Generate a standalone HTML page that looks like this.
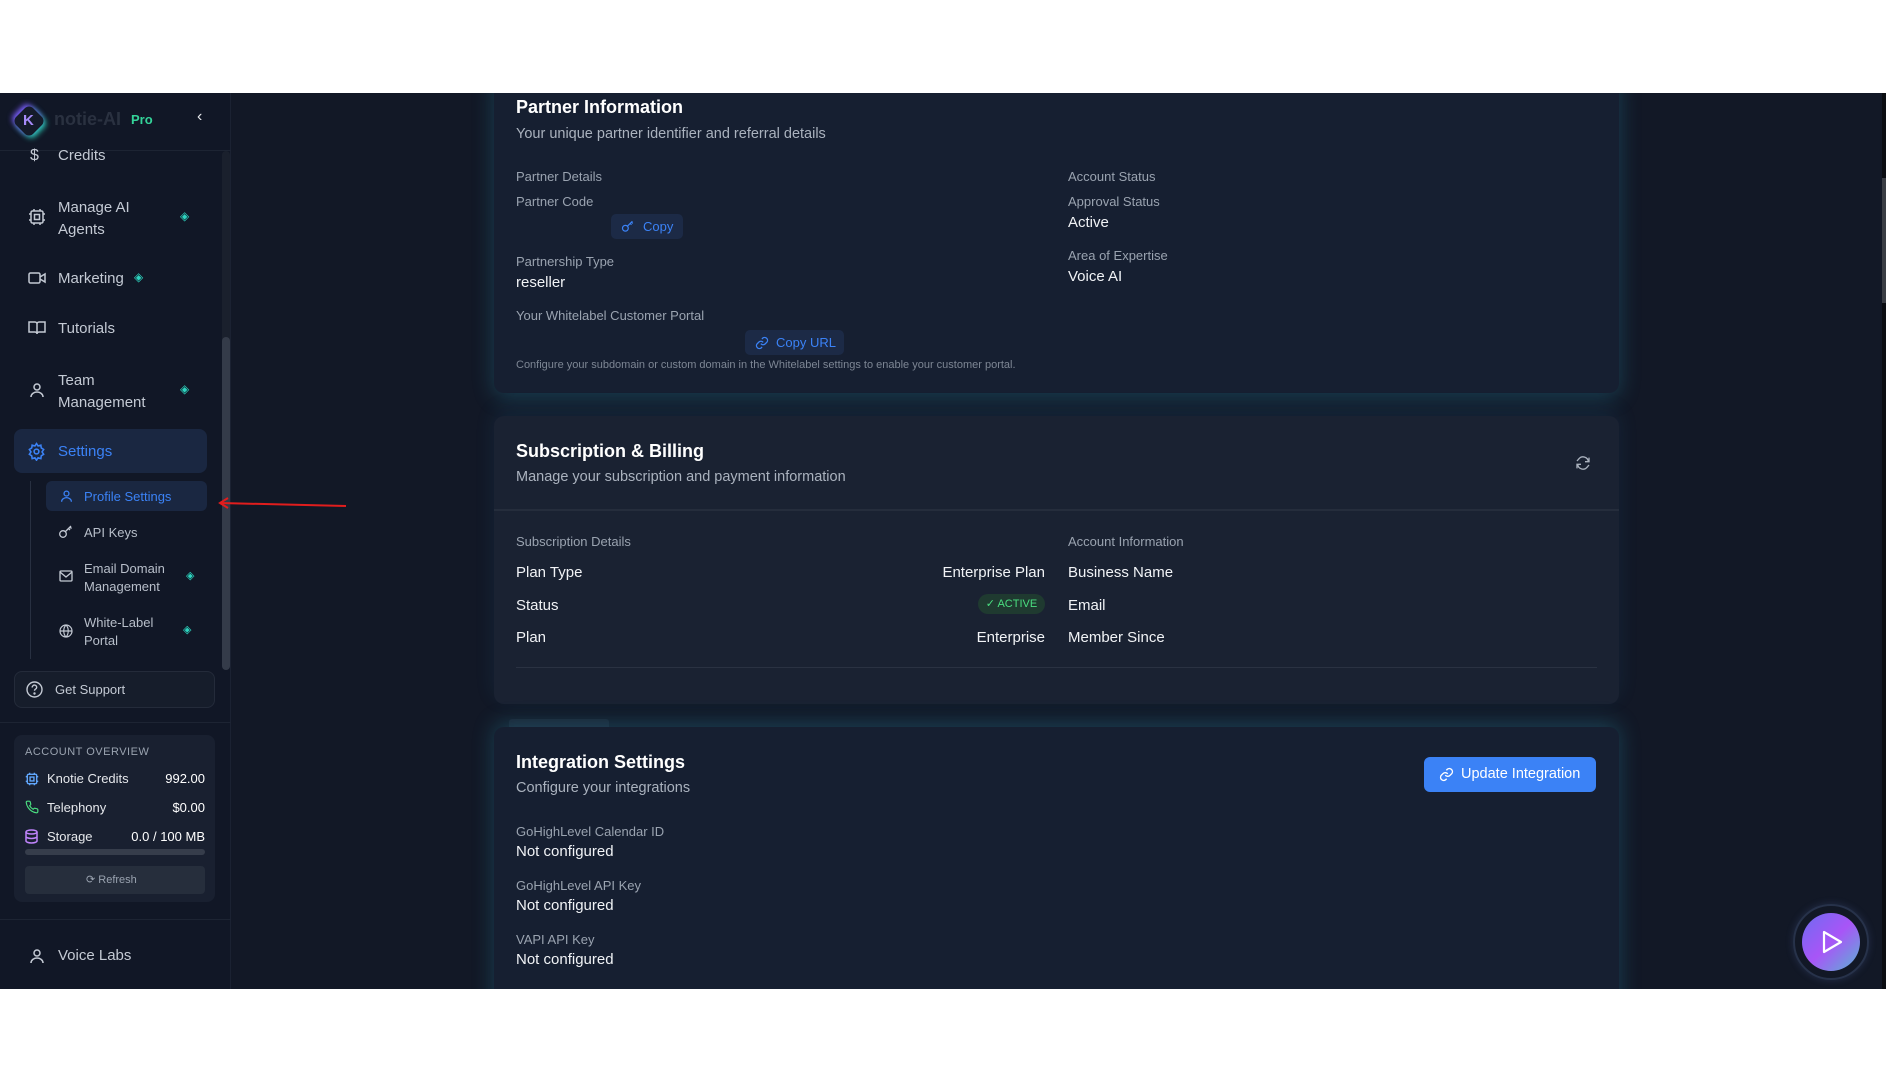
<!DOCTYPE html>
<html><head><meta charset="utf-8"><style>
*{margin:0;padding:0;box-sizing:border-box}
body{width:1886px;height:1080px;background:#fff;font-family:"Liberation Sans",sans-serif;position:relative;overflow:hidden}
.a{position:absolute;white-space:nowrap}
#app{position:absolute;left:0;top:93px;width:1886px;height:896px;background:#121826;overflow:hidden}
#side{position:absolute;left:0;top:0;width:231px;height:896px;background:#111726;border-right:1px solid #1b2232}
.nav{color:#c4cad4;font-size:15px;line-height:22px}
.sub{color:#b8bfca;font-size:13px;line-height:18px}
.lbl{color:#9aa3b0;font-size:13px}
.val{color:#f1f3f6;font-size:15px}
.card{position:absolute;left:494px;width:1125px;border-radius:10px}
svg{position:absolute}
</style></head><body>
<div id="app">
 <div id="side">
  <div class="a" style="left:0;top:57px;width:231px;height:1px;background:#1d2433"></div>
  <div class="a" style="left:17px;top:16px;width:24px;height:24px;background:#151b2a;border-radius:6px;transform:rotate(45deg);box-shadow:-3px 0 6px #7c5cff,3px 0 6px #2dd4bf"></div>
  <div class="a" style="left:23px;top:19px;color:#a78bfa;font-weight:bold;font-size:15px">K</div>
  <div class="a" style="left:54px;top:16px;color:#2a3140;font-weight:bold;font-size:18px">notie-AI</div>
  <div class="a" style="left:131px;top:19px;color:#34d399;font-weight:bold;font-size:13px">Pro</div>
  <div class="a" style="left:197px;top:15px;color:#e5e7eb;font-size:16px">‹</div>
  <div class="a nav" style="left:30px;top:52px;font-size:16px">$</div>
  <div class="a nav" style="left:58px;top:52px">Credits</div>
  <svg style="left:28px;top:115px" width="18" height="18" viewBox="0 0 18 18" fill="none" stroke="#c4cad4" stroke-width="1.5"><rect x="3" y="3" width="12" height="12" rx="1.5"/><rect x="6.5" y="6.5" width="5" height="5"/><path d="M6 1v2M12 1v2M6 15v2M12 15v2M1 6h2M1 12h2M15 6h2M15 12h2"/></svg>
  <div class="a nav" style="left:58px;top:104px">Manage AI</div>
  <div class="a nav" style="left:58px;top:126px">Agents</div>
  <div class="a" style="left:180px;top:116px;color:#2dd4bf;font-size:12px">◈</div>
  <svg style="left:28px;top:177px" width="18" height="16" viewBox="0 0 18 16" fill="none" stroke="#c4cad4" stroke-width="1.5"><rect x="1" y="3" width="11" height="10" rx="1.5"/><path d="M12 7l5-3v8l-5-3"/></svg>
  <div class="a nav" style="left:58px;top:175px">Marketing</div>
  <div class="a" style="left:134px;top:177px;color:#2dd4bf;font-size:12px">◈</div>
  <svg style="left:28px;top:227px" width="18" height="16" viewBox="0 0 18 16" fill="none" stroke="#c4cad4" stroke-width="1.5"><path d="M1 2h6a2 2 0 012 2v10a2 2 0 00-2-2H1zM17 2h-6a2 2 0 00-2 2v10a2 2 0 012-2h6z"/></svg>
  <div class="a nav" style="left:58px;top:225px">Tutorials</div>
  <svg style="left:29px;top:289px" width="16" height="16" viewBox="0 0 16 16" fill="none" stroke="#c4cad4" stroke-width="1.5"><circle cx="8" cy="5" r="3"/><path d="M2 15c0-3 3-5 6-5s6 2 6 5"/></svg>
  <div class="a nav" style="left:58px;top:277px">Team</div>
  <div class="a nav" style="left:58px;top:299px">Management</div>
  <div class="a" style="left:180px;top:289px;color:#2dd4bf;font-size:12px">◈</div>
  <div class="a" style="left:14px;top:336px;width:193px;height:44px;background:#1a2741;border-radius:8px"></div>
  <svg style="left:27px;top:349px" width="19" height="19" viewBox="0 0 24 24" fill="none" stroke="#3b82f6" stroke-width="2"><circle cx="12" cy="12" r="3"/><path d="M12 2l2 3 3.5-1 .5 3.5 3 2-2 3 2 3-3 2-.5 3.5-3.5-1-2 3-2-3-3.5 1-.5-3.5-3-2 2-3-2-3 3-2 .5-3.5 3.5 1z"/></svg>
  <div class="a nav" style="left:58px;top:348px;color:#3b82f6">Settings</div>
  <div class="a" style="left:30px;top:388px;width:1px;height:178px;background:#283041"></div>
  <div class="a" style="left:46px;top:388px;width:161px;height:30px;background:#1a2741;border-radius:6px"></div>
  <svg style="left:60px;top:396px" width="13" height="14" viewBox="0 0 16 16" fill="none" stroke="#3b82f6" stroke-width="1.6"><circle cx="8" cy="5" r="3"/><path d="M2 15c0-3 3-5 6-5s6 2 6 5"/></svg>
  <div class="a sub" style="left:84px;top:395px;color:#3b82f6">Profile Settings</div>
  <svg style="left:58px;top:432px" width="16" height="14" viewBox="0 0 16 14" fill="none" stroke="#c4cad4" stroke-width="1.3"><circle cx="5" cy="9" r="3.3"/><path d="M7.5 6.5L13 1M10.5 3.5l1.5 1.5M12 2l1.5 1.5"/></svg>
  <div class="a sub" style="left:84px;top:431px">API Keys</div>
  <svg style="left:59px;top:477px" width="14" height="12" viewBox="0 0 14 12" fill="none" stroke="#c4cad4" stroke-width="1.3"><rect x="1" y="1" width="12" height="10" rx="1"/><path d="M1 2l6 5 6-5"/></svg>
  <div class="a sub" style="left:84px;top:467px">Email Domain</div>
  <div class="a sub" style="left:84px;top:485px">Management</div>
  <div class="a" style="left:186px;top:476px;color:#2dd4bf;font-size:11px">◈</div>
  <svg style="left:59px;top:531px" width="14" height="14" viewBox="0 0 14 14" fill="none" stroke="#c4cad4" stroke-width="1.2"><circle cx="7" cy="7" r="6"/><path d="M1 7h12M7 1c-3 3-3 9 0 12M7 1c3 3 3 9 0 12"/></svg>
  <div class="a sub" style="left:84px;top:521px">White-Label</div>
  <div class="a sub" style="left:84px;top:539px">Portal</div>
  <div class="a" style="left:183px;top:530px;color:#2dd4bf;font-size:11px">◈</div>
  <div class="a" style="left:222px;top:58px;width:8px;height:519px;background:#1a202d;border-radius:4px"></div>
  <div class="a" style="left:222px;top:244px;width:8px;height:333px;background:#343b49;border-radius:4px"></div>
  <div class="a" style="left:14px;top:578px;width:201px;height:37px;background:#161d2b;border:1px solid #242b3a;border-radius:8px"></div>
  <svg style="left:26px;top:588px" width="17" height="17" viewBox="0 0 17 17" fill="none" stroke="#c4cad4" stroke-width="1.4"><circle cx="8.5" cy="8.5" r="7.5"/><path d="M6.3 6.5a2.2 2.2 0 114 1c-.8.6-1.8 1-1.8 2.2"/><circle cx="8.5" cy="12.5" r=".5" fill="#c4cad4"/></svg>
  <div class="a" style="left:55px;top:589px;color:#c4cad4;font-size:13px">Get Support</div>
  <div class="a" style="left:0;top:629px;width:231px;height:1px;background:#1d2433"></div>
  <div class="a" style="left:14px;top:642px;width:201px;height:167px;background:#192030;border-radius:8px"></div>
  <div class="a" style="left:25px;top:653px;color:#9aa3b0;font-size:11px;letter-spacing:.5px">ACCOUNT OVERVIEW</div>
  <svg style="left:25px;top:679px" width="14" height="14" viewBox="0 0 18 18" fill="none" stroke="#60a5fa" stroke-width="1.8"><rect x="3" y="3" width="12" height="12" rx="1.5"/><rect x="6.5" y="6.5" width="5" height="5"/><path d="M6 1v2M12 1v2M6 15v2M12 15v2M1 6h2M1 12h2M15 6h2M15 12h2"/></svg>
  <div class="a" style="left:47px;top:678px;color:#e5e7eb;font-size:13px">Knotie Credits</div>
  <div class="a" style="left:105px;width:100px;text-align:right;top:678px;color:#fff;font-size:13px">992.00</div>
  <svg style="left:25px;top:707px" width="14" height="14" viewBox="0 0 24 24" fill="none" stroke="#4ade80" stroke-width="2"><path d="M22 16.9v3a2 2 0 01-2.2 2 19.8 19.8 0 01-8.6-3.1 19.5 19.5 0 01-6-6A19.8 19.8 0 012.1 4.2 2 2 0 014.1 2h3a2 2 0 012 1.7c.1 1 .4 1.9.7 2.8a2 2 0 01-.5 2.1L8 9.9a16 16 0 006 6l1.3-1.3a2 2 0 012.1-.4c.9.3 1.8.6 2.8.7a2 2 0 011.7 2z"/></svg>
  <div class="a" style="left:47px;top:707px;color:#e5e7eb;font-size:13px">Telephony</div>
  <div class="a" style="left:105px;width:100px;text-align:right;top:707px;color:#fff;font-size:13px">$0.00</div>
  <svg style="left:25px;top:736px" width="13" height="15" viewBox="0 0 13 15" fill="none" stroke="#c084fc" stroke-width="1.5"><ellipse cx="6.5" cy="3" rx="5.5" ry="2"/><path d="M1 3v9c0 1 2.5 2 5.5 2s5.5-1 5.5-2V3M1 7.5c0 1 2.5 2 5.5 2s5.5-1 5.5-2"/></svg>
  <div class="a" style="left:47px;top:736px;color:#e5e7eb;font-size:13px">Storage</div>
  <div class="a" style="left:105px;width:100px;text-align:right;top:736px;color:#fff;font-size:13px">0.0 / 100 MB</div>
  <div class="a" style="left:25px;top:756px;width:180px;height:6px;background:#363d4b;border-radius:3px"></div>
  <div class="a" style="left:25px;top:773px;width:180px;height:28px;background:#262e3c;border-radius:4px"></div>
  <div class="a" style="left:86px;top:780px;color:#9aa3b0;font-size:11px">⟳ Refresh</div>
  <div class="a" style="left:0;top:826px;width:231px;height:1px;background:#1d2433"></div>
  <svg style="left:29px;top:855px" width="16" height="16" viewBox="0 0 16 16" fill="none" stroke="#c4cad4" stroke-width="1.5"><circle cx="8" cy="5" r="3"/><path d="M2 15c0-3 3-5 6-5s6 2 6 5"/></svg>
  <div class="a nav" style="left:58px;top:852px">Voice Labs</div>
 </div>
 <svg style="left:216px;top:404px" width="134" height="16" viewBox="0 0 134 16"><path d="M4 6 L130 9" stroke="#e11d1d" stroke-width="2"/><path d="M12 1 L4 6 L12 11" stroke="#e11d1d" stroke-width="2" fill="none"/></svg>

 <div class="card" style="top:-20px;height:320px;background:#161f31;box-shadow:0 4px 22px rgba(45,160,190,.3)"></div>
 <div class="a" style="left:516px;top:4px;color:#fff;font-size:18px;font-weight:bold">Partner Information</div>
 <div class="a" style="left:516px;top:33px;color:#aab2be;font-size:14.5px">Your unique partner identifier and referral details</div>
 <div class="a lbl" style="left:516px;top:76px">Partner Details</div>
 <div class="a lbl" style="left:516px;top:101px">Partner Code</div>
 <div class="a" style="left:611px;top:121px;width:72px;height:25px;background:#1c2a46;border-radius:5px;color:#3b82f6;font-size:13px;line-height:25px;padding-left:32px">Copy</div>
 <svg style="left:621px;top:127px" width="14" height="13" viewBox="0 0 16 14" fill="none" stroke="#3b82f6" stroke-width="1.4"><circle cx="5" cy="9" r="3.3"/><path d="M7.5 6.5L13 1M10.5 3.5l1.5 1.5M12 2l1.5 1.5"/></svg>
 <div class="a lbl" style="left:516px;top:161px">Partnership Type</div>
 <div class="a val" style="left:516px;top:181px">reseller</div>
 <div class="a lbl" style="left:516px;top:215px">Your Whitelabel Customer Portal</div>
 <div class="a" style="left:745px;top:237px;width:99px;height:25px;background:#1c2a46;border-radius:5px;color:#3b82f6;font-size:13px;line-height:25px;padding-left:31px">Copy URL</div>
 <svg style="left:755px;top:243px" width="14" height="14" viewBox="0 0 24 24" fill="none" stroke="#3b82f6" stroke-width="2.2"><path d="M10 13a5 5 0 007.5.5l3-3a5 5 0 00-7-7l-1.7 1.7M14 11a5 5 0 00-7.5-.5l-3 3a5 5 0 007 7l1.7-1.7"/></svg>
 <div class="a" style="left:516px;top:266px;color:#7d8694;font-size:11px">Configure your subdomain or custom domain in the Whitelabel settings to enable your customer portal.</div>
 <div class="a lbl" style="left:1068px;top:76px">Account Status</div>
 <div class="a lbl" style="left:1068px;top:101px">Approval Status</div>
 <div class="a val" style="left:1068px;top:121px">Active</div>
 <div class="a lbl" style="left:1068px;top:155px">Area of Expertise</div>
 <div class="a val" style="left:1068px;top:175px">Voice AI</div>

 <div class="card" style="top:323px;height:288px;background:#1a2232;box-shadow:0 -6px 20px rgba(45,130,190,.12)"></div>
 <div class="a" style="left:494px;top:416px;width:1125px;height:2px;background:#252d3c"></div>
 <div class="a" style="left:516px;top:348px;color:#fff;font-size:18px;font-weight:bold">Subscription &amp; Billing</div>
 <div class="a" style="left:516px;top:376px;color:#aab2be;font-size:14.5px">Manage your subscription and payment information</div>
 <svg style="left:1575px;top:362px" width="16" height="16" viewBox="0 0 24 24" fill="none" stroke="#aab2be" stroke-width="2"><path d="M21 4v6h-6M3 20v-6h6"/><path d="M20 10A8 8 0 006 5.5L3 9M4 14a8 8 0 0014 4.5l3-3.5"/></svg>
 <div class="a lbl" style="left:516px;top:441px">Subscription Details</div>
 <div class="a lbl" style="left:1068px;top:441px">Account Information</div>
 <div class="a val" style="left:516px;top:471px">Plan Type</div>
 <div class="a val" style="left:925px;top:471px;width:120px;text-align:right">Enterprise Plan</div>
 <div class="a val" style="left:516px;top:504px">Status</div>
 <div class="a" style="left:978px;top:501px;width:67px;height:20px;background:#1f3a30;border-radius:10px;color:#4ade80;font-size:11px;line-height:20px;text-align:center">✓ ACTIVE</div>
 <div class="a val" style="left:516px;top:536px">Plan</div>
 <div class="a val" style="left:925px;top:536px;width:120px;text-align:right">Enterprise</div>
 <div class="a val" style="left:1068px;top:471px">Business Name</div>
 <div class="a val" style="left:1068px;top:504px">Email</div>
 <div class="a val" style="left:1068px;top:536px">Member Since</div>
 <div class="a" style="left:516px;top:574px;width:1081px;height:1px;background:#2a3242"></div>

 <div class="a" style="left:509px;top:626px;width:100px;height:12px;background:#1a2232;border-radius:3px"></div>
 <div class="card" style="top:634px;height:300px;background:#161f31;box-shadow:0 -4px 22px rgba(45,160,190,.3)"></div>
 <div class="a" style="left:516px;top:659px;color:#fff;font-size:18px;font-weight:bold">Integration Settings</div>
 <div class="a" style="left:516px;top:687px;color:#aab2be;font-size:14.5px">Configure your integrations</div>
 <div class="a" style="left:1424px;top:664px;width:172px;height:35px;background:#3b82f6;border-radius:6px;color:#fff;font-size:14.5px;line-height:35px;padding-left:37px">Update Integration</div>
 <svg style="left:1439px;top:674px" width="15" height="15" viewBox="0 0 24 24" fill="none" stroke="#fff" stroke-width="2.2"><path d="M10 13a5 5 0 007.5.5l3-3a5 5 0 00-7-7l-1.7 1.7M14 11a5 5 0 00-7.5-.5l-3 3a5 5 0 007 7l1.7-1.7"/></svg>
 <div class="a lbl" style="left:516px;top:731px">GoHighLevel Calendar ID</div>
 <div class="a val" style="left:516px;top:750px">Not configured</div>
 <div class="a lbl" style="left:516px;top:785px">GoHighLevel API Key</div>
 <div class="a val" style="left:516px;top:804px">Not configured</div>
 <div class="a lbl" style="left:516px;top:839px">VAPI API Key</div>
 <div class="a val" style="left:516px;top:858px">Not configured</div>

 <div class="a" style="left:1882px;top:0;width:4px;height:896px;background:#0b0d12"></div>
 <div class="a" style="left:1882px;top:85px;width:4px;height:125px;background:#3a3d44"></div>
 <div class="a" style="left:1793px;top:811px;width:76px;height:76px;border-radius:50%;border:2px solid #27324a;box-shadow:0 0 8px rgba(80,100,160,.3)"></div>
 <div class="a" style="left:1802px;top:820px;width:58px;height:58px;border-radius:50%;background:linear-gradient(135deg,#6d6cf0,#a855f7 50%,#5ab4d4)"></div>
 <svg style="left:1820px;top:836px" width="24" height="26" viewBox="0 0 24 26"><path d="M4 3 L21 13 L4 23 Z" fill="none" stroke="#fff" stroke-width="2.2" stroke-linejoin="round"/></svg>
</div>
</body></html>
